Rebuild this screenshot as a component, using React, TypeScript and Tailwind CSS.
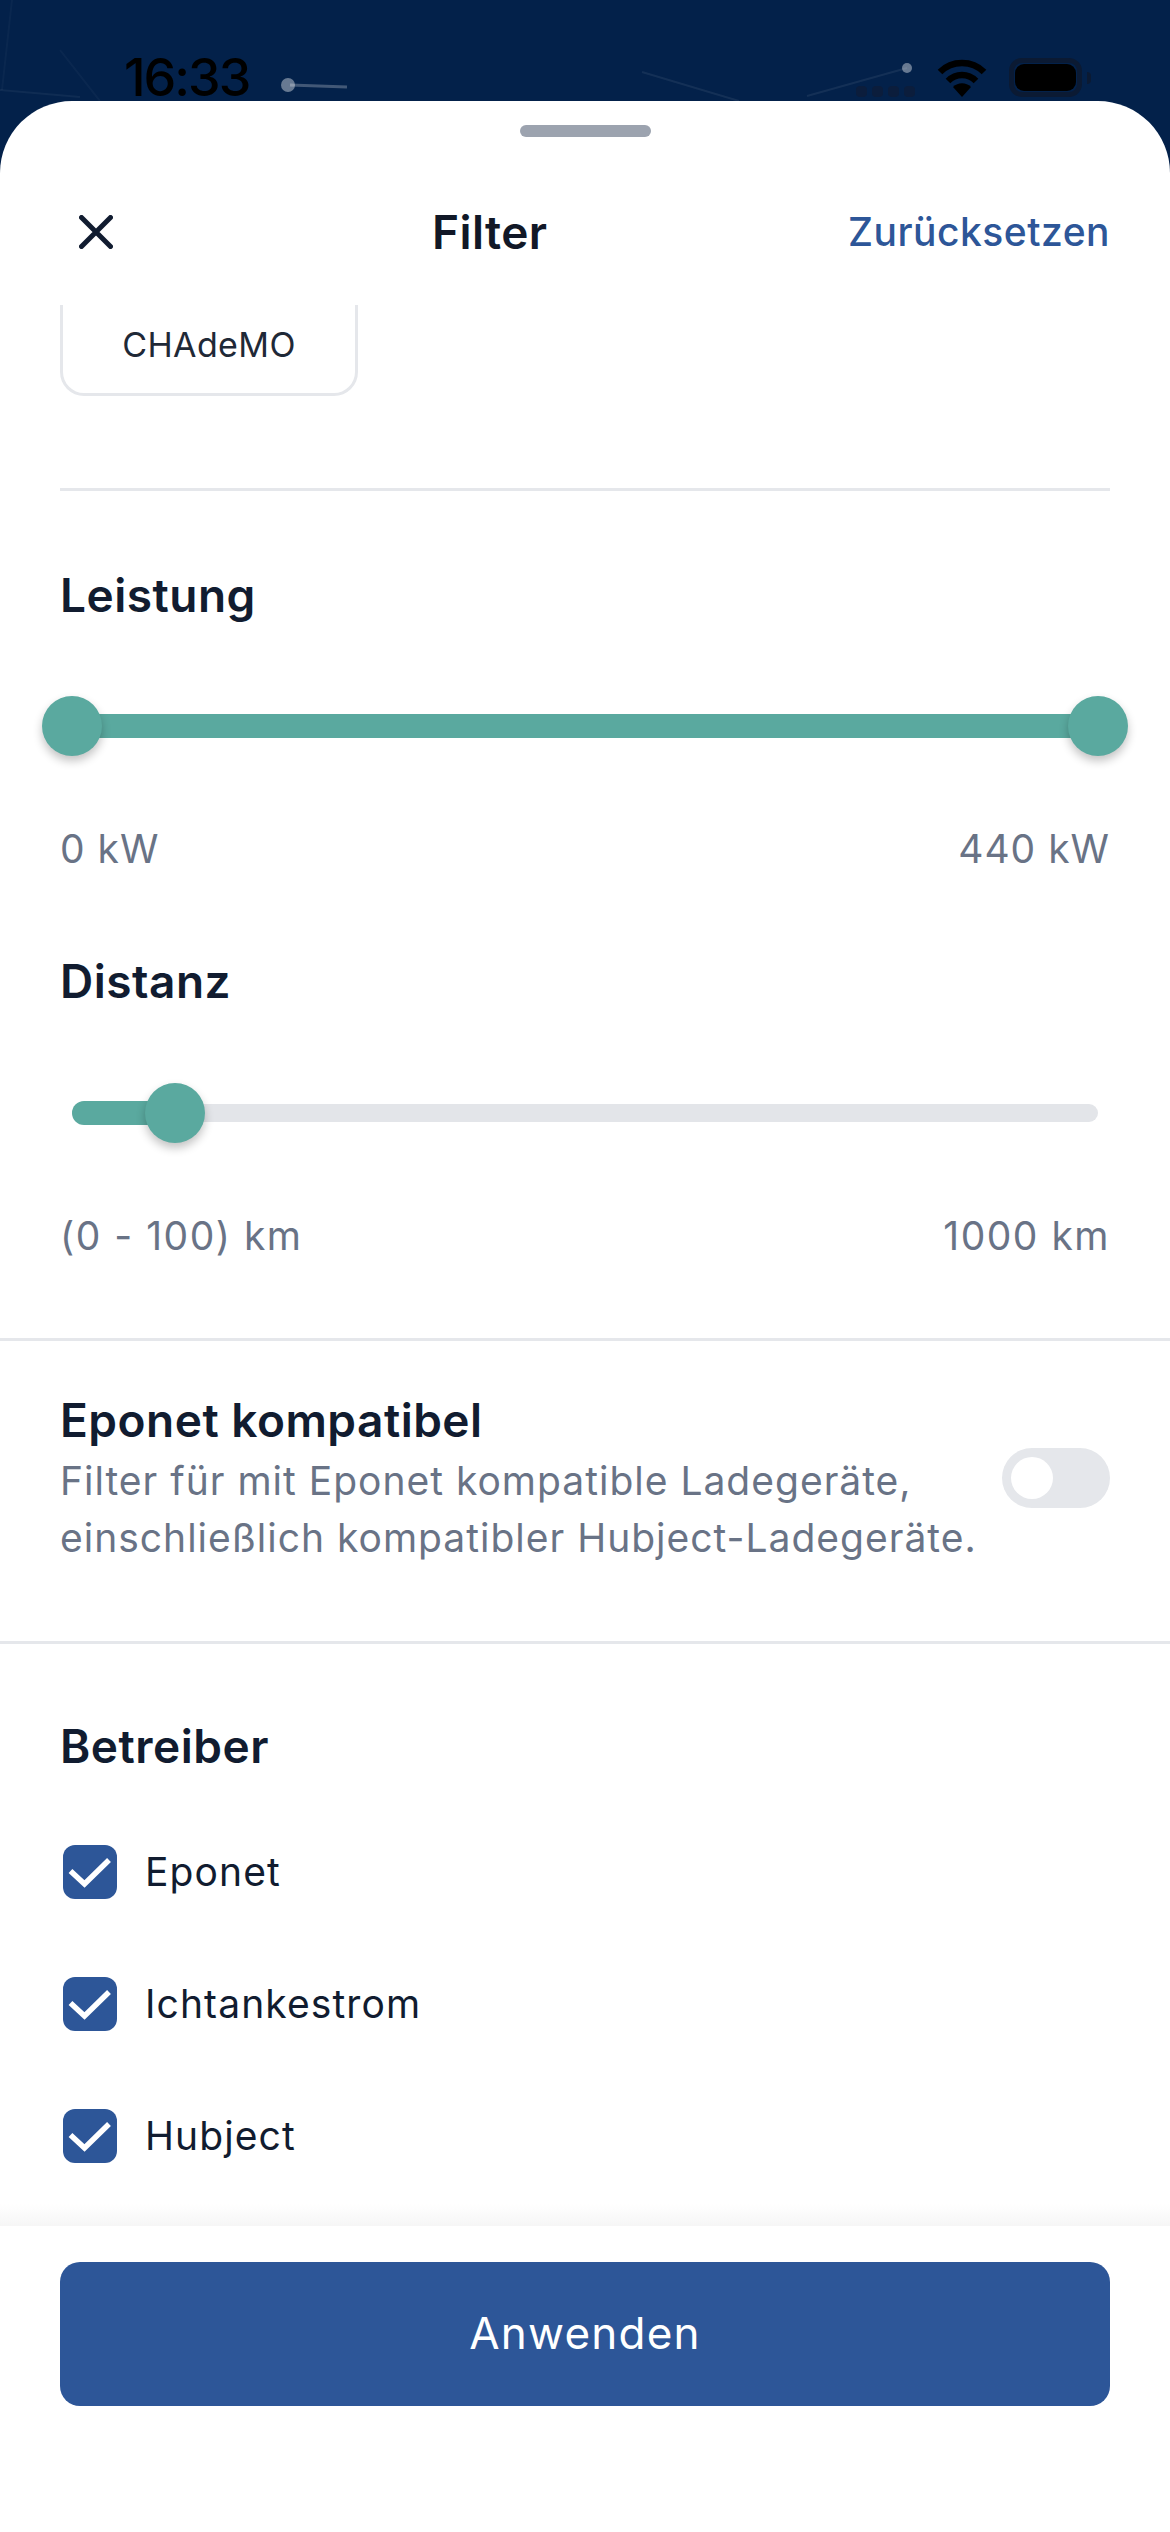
const font = { fontFamily: "Inter, 'Noto Sans', sans-serif" };

function Check() {
  return (
    <div className="w-[54px] h-[54px] rounded-[12px] bg-[#2d5698] flex items-center justify-center shrink-0">
      <svg width="54" height="54" viewBox="0 0 54 54" fill="none">
        <path d="M7.5 26 L21.5 39 L46 15" stroke="#fff" strokeWidth="5.5" />
      </svg>
    </div>
  );
}

function Thumb({ className = "" }: { className?: string }) {
  return <div className={"w-[60px] h-[60px] rounded-full bg-[#5aa99f] shadow-[0_5px_10px_rgba(0,0,0,0.24)] shrink-0 " + className} />;
}

function Operator({ name }: { name: string }) {
  return (
    <div className="flex items-center gap-[28px] h-[54px] pl-[3px]">
      <Check />
      <span className="text-[39px] leading-[54px] tracking-[1.1px] text-[#111c30]">{name}</span>
    </div>
  );
}

function RangeLabels({ left, right, wide = false }: { left: string; right: string; wide?: boolean }) {
  return (
    <div className={"flex justify-between text-[39px] leading-[48px] text-[#697386] " + (wide ? "tracking-[1.5px]" : "tracking-[1px]")}>
      <span>{left}</span>
      <span>{right}</span>
    </div>
  );
}

function Heading({ children, className = "" }: { children: string; className?: string }) {
  return <div className={"text-[46px] leading-[60px] font-semibold tracking-[0.5px] text-[#111c30] " + className}>{children}</div>;
}

export default function App() {
  return (
    <div className="relative w-[1170px] h-[2532px] bg-[#03214a] overflow-hidden" style={font}>
      <svg className="absolute left-0 top-0" width="1170" height="101" viewBox="0 0 1170 101" fill="none">
        <path d="M290 85 L347 87" stroke="#fff" strokeOpacity="0.25" strokeWidth="3" />
        <circle cx="288" cy="85" r="7" fill="#fff" fillOpacity="0.4" />
        <circle cx="907" cy="68" r="5" fill="#fff" fillOpacity="0.4" />
        <path d="M907 68 L807 96" stroke="#fff" strokeOpacity="0.07" strokeWidth="2" />
        <path d="M642 72 L739 101" stroke="#fff" strokeOpacity="0.07" strokeWidth="2" />
        <path d="M0 90 L80 97" stroke="#fff" strokeOpacity="0.05" strokeWidth="2" />
        <path d="M12 0 L2 90 M60 50 L100 101" stroke="#fff" strokeOpacity="0.03" strokeWidth="2" />
      </svg>
      <div className="relative flex items-start h-[101px] pl-[124px] pr-[79px] pt-[53px] text-black">
        <span className="text-[52px] leading-[50px] font-medium tracking-[-2px] flex-1">16:33</span>
        <div className="flex items-start gap-[22px] pt-[5px]">
          <div className="flex gap-[5px] mt-[28px]">
            <div className="w-[11px] h-[11px] rounded-[4px] bg-[#0b1d3c]" />
            <div className="w-[11px] h-[11px] rounded-[4px] bg-[#0b1d3c]" />
            <div className="w-[11px] h-[11px] rounded-[4px] bg-[#0b1d3c]" />
            <div className="w-[11px] h-[11px] rounded-[4px] bg-[#0b1d3c]" />
          </div>
          <svg width="50" height="38" viewBox="0 0 50 38" fill="none" className="mt-[1px]">
            <path d="M3 13 C15 1 35 1 47 13" stroke="#000" strokeWidth="6.5" />
            <path d="M11 22 C19 14 31 14 39 22" stroke="#000" strokeWidth="6.5" />
            <path d="M16 28 C21 23 29 23 34 28 L25 38 Z" fill="#000" />
          </svg>
          <div className="flex items-center gap-[5px]">
            <div className="w-[73px] h-[39px] rounded-[13px] border-[5px] border-[#0b1a33] p-[1px] flex">
              <div className="flex-1 rounded-[9px] bg-black" />
            </div>
            <div className="w-[4px] h-[12px] rounded-r-[4px] bg-[#0b1a33]" />
          </div>
        </div>
      </div>
      <div className="absolute left-0 right-0 top-[101px] bottom-0 bg-white rounded-t-[72px] flex flex-col overflow-hidden">
        <div className="w-[131px] h-[12px] rounded-full bg-[#9ca3af] self-center mt-[24px] shrink-0" />
        <div className="flex items-center h-[60px] mt-[65px] px-[60px] shrink-0">
          <div className="w-[372px] pl-[19px] shrink-0">
            <svg width="34" height="34" viewBox="0 0 34 34" fill="none" className="block">
              <path d="M2.5 2.5 L31.5 31.5 M31.5 2.5 L2.5 31.5" stroke="#111c30" strokeWidth="5" strokeLinecap="round" />
            </svg>
          </div>
          <span className="text-[46px] font-semibold tracking-[0.4px] text-[#111827]">Filter</span>
          <span className="ml-auto text-[39px] font-medium tracking-[0.5px] text-[#2d5698]">Zurücksetzen</span>
        </div>
        <div className="flex-1 min-h-0 overflow-hidden mt-[43px]">
          <div className="px-[60px]">
            <div className="w-[298px] h-[91px] border-[3px] border-t-0 border-[#e5e7eb] rounded-b-[24px] flex items-center justify-center pb-[10px] text-[34px] tracking-[0.4px] text-[#1f2937]">CHAdeMO</div>
            <div className="h-[3px] bg-[#e5e7eb] mt-[92px]" />
            <Heading className="mt-[74px]">Leistung</Heading>
            <div className="relative flex items-center justify-between h-[60px] mt-[71px] -mx-[18px]">
              <div className="absolute left-[18px] right-[18px] h-[24px] bg-[#5aa99f]" />
              <Thumb className="relative" />
              <Thumb className="relative" />
            </div>
            <div className="mt-[69px]"><RangeLabels left="0 kW" right="440 kW" /></div>
            <Heading className="mt-[78px]">Distanz</Heading>
            <div className="relative flex items-center h-[60px] mt-[72px] -mx-[18px]">
              <div className="absolute left-[30px] right-[30px] h-[18px] rounded-full bg-[#e3e5e9]" />
              <div className="absolute left-[30px] w-[110px] h-[24px] rounded-l-full bg-[#5aa99f]" />
              <Thumb className="relative ml-[103px]" />
            </div>
            <div className="mt-[69px]"><RangeLabels left="(0 - 100) km" right="1000 km" wide /></div>
          </div>
          <div className="h-[3px] bg-[#e5e7eb] mt-[78px]" />
          <div className="flex items-center justify-between px-[60px] pt-[49px] pb-[75px]">
            <div>
              <Heading>Eponet kompatibel</Heading>
              <p className="mt-[2px] text-[39px] leading-[57px] tracking-[1px] text-[#697386] whitespace-nowrap">
                Filter für mit Eponet kompatible Ladegeräte,<br />
                einschließlich kompatibler Hubject-Ladegeräte.
              </p>
            </div>
            <div className="w-[108px] h-[60px] rounded-full bg-[#e5e7eb] p-[9px] shrink-0">
              <div className="w-[42px] h-[42px] rounded-full bg-white" />
            </div>
          </div>
          <div className="h-[3px] bg-[#e5e7eb]" />
          <div className="px-[60px] pt-[72px]">
            <Heading>Betreiber</Heading>
            <div className="flex flex-col gap-[78px] mt-[69px]">
              <Operator name="Eponet" />
              <Operator name="Ichtankestrom" />
              <Operator name="Hubject" />
            </div>
          </div>
        </div>
        <div className="relative h-[306px] bg-white px-[60px] pt-[36px] shrink-0">
          <div className="absolute left-0 right-0 -top-[22px] h-[22px] bg-linear-to-b from-white to-[#f6f6f6]" />
          <div className="h-[144px] rounded-[20px] bg-[#2d5698] flex items-center justify-center pb-[2px] text-[44px] tracking-[1.2px] text-white font-normal">Anwenden</div>
        </div>
      </div>
    </div>
  );
}
